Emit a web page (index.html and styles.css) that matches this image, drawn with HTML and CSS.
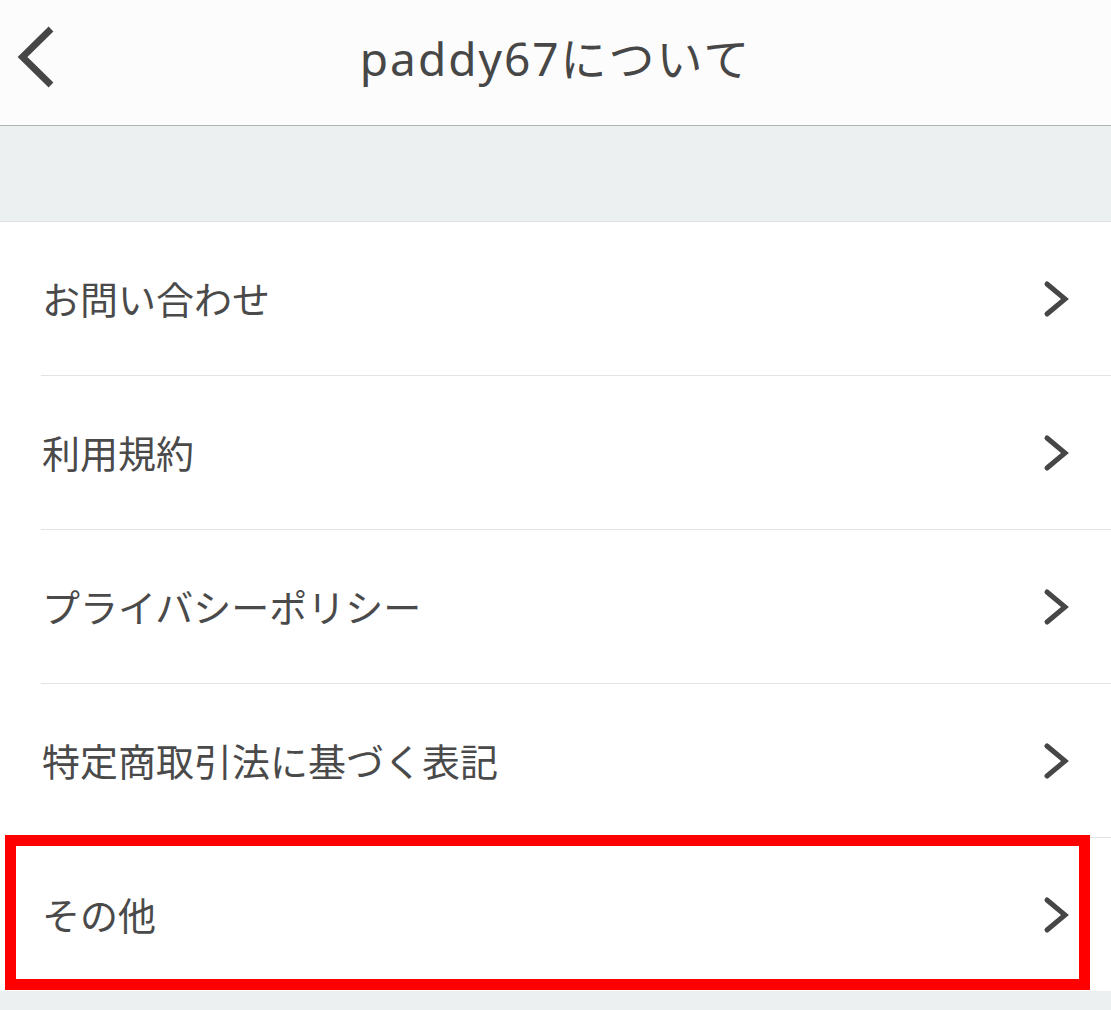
FILE: index.html
```html
<!DOCTYPE html>
<html lang="ja">
<head>
<meta charset="utf-8">
<title>paddy67について</title>
<link rel="stylesheet" href="styles.css">
</head>
<body>
<div class="page">
  <header class="nav">
    <div class="nav-left">
      <svg class="back" width="60" height="125" viewBox="0 0 60 125" aria-hidden="true">
        <path d="M51 29 L22.5 57 L51 85" fill="none" stroke="#464646" stroke-width="6.8" stroke-linecap="butt" stroke-linejoin="miter"/>
      </svg>
    </div>
    <h1 class="nav-title">paddy67について</h1>
    <div class="nav-right"></div>
  </header>
  <div class="spacer"></div>
  <ul class="menu">
    <li class="row"><div class="row-inner"><span class="label">お問い合わせ</span><svg class="chev" width="30" height="40" viewBox="0 0 30 40" aria-hidden="true"><path d="M6 5 L24 20 L6 35" fill="none" stroke="#464646" stroke-width="5" stroke-linecap="round" stroke-linejoin="miter"/></svg></div></li>
    <li class="row"><div class="row-inner"><span class="label">利用規約</span><svg class="chev" width="30" height="40" viewBox="0 0 30 40" aria-hidden="true"><path d="M6 5 L24 20 L6 35" fill="none" stroke="#464646" stroke-width="5" stroke-linecap="round" stroke-linejoin="miter"/></svg></div></li>
    <li class="row"><div class="row-inner"><span class="label">プライバシーポリシー</span><svg class="chev" width="30" height="40" viewBox="0 0 30 40" aria-hidden="true"><path d="M6 5 L24 20 L6 35" fill="none" stroke="#464646" stroke-width="5" stroke-linecap="round" stroke-linejoin="miter"/></svg></div></li>
    <li class="row"><div class="row-inner"><span class="label">特定商取引法に基づく表記</span><svg class="chev" width="30" height="40" viewBox="0 0 30 40" aria-hidden="true"><path d="M6 5 L24 20 L6 35" fill="none" stroke="#464646" stroke-width="5" stroke-linecap="round" stroke-linejoin="miter"/></svg></div></li>
    <li class="row last"><div class="row-inner"><span class="label">その他</span><svg class="chev" width="30" height="40" viewBox="0 0 30 40" aria-hidden="true"><path d="M6 5 L24 20 L6 35" fill="none" stroke="#464646" stroke-width="5" stroke-linecap="round" stroke-linejoin="miter"/></svg></div><div class="highlight"></div></li>
  </ul>
</div>
</body>
</html>
```

FILE: styles.css
```css
* { box-sizing: border-box; }

html, body {
  margin: 0;
  padding: 0;
  background: #edf0f1;
  font-family: "Noto Sans", "Noto Sans CJK JP", sans-serif;
  color: #4a4a4a;
}

.page {
  width: 1111px;
}

.nav {
  height: 126px;
  background: #fcfcfc;
  border-bottom: 1px solid #b4b4b4;
  display: grid;
  grid-template-columns: 1fr auto 1fr;
  align-items: center;
}

.nav-left {
  display: flex;
  align-items: center;
  height: 125px;
}

.back {
  display: block;
}

.nav-title {
  margin: 0 0 10px 0;
  font-size: 46px;
  font-weight: 400;
  letter-spacing: 2px;
  color: #474747;
  line-height: 1;
}

.spacer {
  height: 96px;
  border-bottom: 1px solid #dfe2e3;
}

.menu {
  list-style: none;
  margin: 0;
  padding: 0;
  background: #ffffff;
}

.row {
  position: relative;
  padding-left: 41px;
}

.row-inner {
  height: 154px;
  display: flex;
  align-items: center;
  justify-content: space-between;
  padding-right: 41px;
  border-bottom: 1px solid #e3e3e3;
}

.row.last .row-inner {
  height: 153px;
  border-bottom: none;
}

.label {
  font-size: 38px;
  line-height: 1;
  color: #4a4a4a;
  padding-left: 1px;
}

.chev {
  display: block;
  margin-right: -1px;
}

.highlight {
  position: absolute;
  top: -3px;
  left: 5px;
  right: 21px;
  bottom: 1px;
  border: 11px solid #ff0000;
  pointer-events: none;
}
```
